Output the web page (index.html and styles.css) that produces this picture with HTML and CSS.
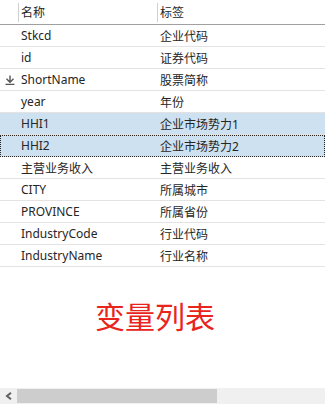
FILE: index.html
```html
<!DOCTYPE html>
<html lang="zh">
<head>
  <meta charset="UTF-8" />
  <title>变量列表</title>
  <link rel="stylesheet" href="styles.css">
</head>
<body>
  <div class="panel">
    <div class="grid">
      <div class="row head">
        <div class="mark"></div>
        <div class="cell name">名称</div>
        <div class="cell label">标签</div>
      </div>
      <div class="row"><div class="mark"></div><div class="cell name">Stkcd</div><div class="cell label">企业代码</div></div>
      <div class="row"><div class="mark"></div><div class="cell name">id</div><div class="cell label">证券代码</div></div>
      <div class="row">
        <div class="mark">
          <svg width="10" height="10" viewBox="0 0 10 10">
            <path d="M5 0.5 V7 M1.5 3.8 L5 7.3 L8.5 3.8 M0.5 9.5 H9.5" fill="none" stroke="#555" stroke-width="1.4"/>
          </svg>
        </div>
        <div class="cell name">ShortName</div><div class="cell label">股票简称</div>
      </div>
      <div class="row"><div class="mark"></div><div class="cell name">year</div><div class="cell label">年份</div></div>
      <div class="row selected"><div class="mark"></div><div class="cell name">HHI1</div><div class="cell label">企业市场势力1</div></div>
      <div class="row selected focus"><div class="mark"></div><div class="cell name">HHI2</div><div class="cell label">企业市场势力2</div></div>
      <div class="row"><div class="mark"></div><div class="cell name">主营业务收入</div><div class="cell label">主营业务收入</div></div>
      <div class="row"><div class="mark"></div><div class="cell name">CITY</div><div class="cell label">所属城市</div></div>
      <div class="row"><div class="mark"></div><div class="cell name">PROVINCE</div><div class="cell label">所属省份</div></div>
      <div class="row"><div class="mark"></div><div class="cell name">IndustryCode</div><div class="cell label">行业代码</div></div>
      <div class="row"><div class="mark"></div><div class="cell name">IndustryName</div><div class="cell label">行业名称</div></div>
    </div>

    <div class="caption">变量列表</div>

    <div class="scrollbar">
      <div class="arrow">
        <svg width="8" height="8" viewBox="0 0 8 8">
          <path d="M6 0.8 L2 4 L6 7.2" fill="none" stroke="#606060" stroke-width="2"/>
        </svg>
      </div>
      <div class="thumb"></div>
    </div>
  </div>
</body>
</html>
```

FILE: styles.css
```css
body {
  margin: 0;
  background: #fff;
  font-family: "Noto Sans", "Noto Sans CJK SC", sans-serif;
  font-size: 12px;
  color: #262626;
}

.panel {
  width: 325px;
  height: 404px;
  display: flex;
  flex-direction: column;
  overflow: hidden;
}

.row {
  display: grid;
  grid-template-columns: 18px 139px 1fr;
  height: 21px;
  border-bottom: 1px solid #e3e3e3;
  align-items: center;
}

.row.head {
  height: 24px;
  border-bottom: 1px solid #a0a0a0;
}

.row.head .cell {
  border-left: 1px solid #d0d0d0;
  height: 19px;
  line-height: 19px;
  padding-left: 2px;
}

.cell {
  padding-left: 3px;
  white-space: nowrap;
  overflow: hidden;
}

.mark {
  display: flex;
  justify-content: center;
  align-items: center;
  padding-left: 2px;
}

.row.selected {
  background: #cde1f1;
}

.row.focus {
  outline: 1px dotted #222;
  outline-offset: -1px;
}

.caption {
  flex: 1;
  padding-top: 31px;
  padding-left: 95px;
  color: #e8241c;
  font-family: "Noto Sans CJK SC", sans-serif;
  font-size: 30px;
  line-height: 34px;
}

.scrollbar {
  height: 16px;
  background: #f0f0f0;
  display: flex;
}

.arrow {
  width: 17px;
  display: flex;
  align-items: center;
  justify-content: center;
}

.thumb {
  width: 200px;
  margin: 1px 0 1px;
  background: #cdcdcd;
}
```
